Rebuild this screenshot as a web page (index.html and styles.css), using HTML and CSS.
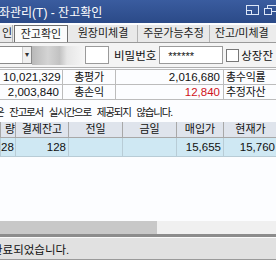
FILE: index.html
```html
<!DOCTYPE html>
<html lang="ko">
<head>
    <meta charset="UTF-8">
    <title>잔고확인</title>
    <link rel="stylesheet" href="styles.css">
</head>
<body>
    <div class="window">
        <div class="titlebar">
            <span class="title">좌관리(T) - 잔고확인</span>
            <span class="controls">
                <svg width="13" height="10" viewBox="0 0 13 10">
                    <rect x="0.5" y="0.5" width="12" height="9" fill="none" stroke="#dce6f7"/>
                    <rect x="0.5" y="5.5" width="5" height="4" fill="none" stroke="#dce6f7"/>
                </svg>
                <svg width="12" height="10" viewBox="0 0 12 10">
                    <rect x="3.5" y="0.5" width="9" height="6" fill="none" stroke="#dce6f7"/>
                    <rect x="0.5" y="3.5" width="7" height="6" fill="#2d4d8e" stroke="#dce6f7"/>
                </svg>
            </span>
        </div>
        <div class="tabs">
            <div class="tab cut">인</div>
            <div class="tab active">잔고확인</div>
            <div class="tab t3">원장미체결</div>
            <div class="tab t4">주문가능추정</div>
            <div class="tab">잔고/미체결</div>
        </div>
        <div class="inputs">
            <div class="combo"><span class="arrow">▾</span></div>
            <div class="masked"></div>
            <div class="field"></div>
            <span class="label">비밀번호</span>
            <div class="field pw">******</div>
            <span class="check"></span>
            <span class="label">상장잔</span>
        </div>
        <table class="summary">
            <colgroup>
                <col class="s1"><col class="s2"><col class="s3"><col class="s4">
            </colgroup>
            <tr>
                <td class="num">10,021,329</td>
                <td class="head">총평가</td>
                <td class="num">2,016,680</td>
                <td class="head">총수익률</td>
            </tr>
            <tr>
                <td class="num">2,003,840</td>
                <td class="head">총손익</td>
                <td class="num red">12,840</td>
                <td class="head">추정자산</td>
            </tr>
        </table>
        <div class="notice">은 잔고로서 실시간으로 제공되지 않습니다.</div>
        <table class="grid">
            <colgroup>
                <col class="c1"><col class="c2"><col class="c3"><col class="c4"><col class="c5"><col class="c6">
            </colgroup>
            <tr>
                <th class="first">량</th>
                <th>결제잔고</th>
                <th>전일</th>
                <th>금일</th>
                <th>매입가</th>
                <th>현재가</th>
            </tr>
            <tr class="row">
                <td>28</td>
                <td>128</td>
                <td></td>
                <td></td>
                <td>15,655</td>
                <td>15,760</td>
            </tr>
        </table>
        <div class="grid-empty"></div>
        <div class="hscroll"><div class="thumb"></div></div>
        <div class="status">완료되었습니다.</div>
    </div>
</body>
</html>
```

FILE: styles.css
```css
body {
    margin: 0;
    background: #fcfdff;
    font-family: "Liberation Sans", "Noto Sans CJK KR", sans-serif;
    font-size: 11px;
    color: #111;
}
.window {
    width: 276px;
    height: 260px;
    overflow: hidden;
    display: flex;
    flex-direction: column;
}
.titlebar {
    height: 23px;
    flex: none;
    display: flex;
    align-items: center;
    justify-content: space-between;
    background: linear-gradient(#3a5c9f, #2b4a88);
    color: #fff;
}
.title {
    font-size: 12px;
    margin-left: -1px;
}
.controls {
    display: flex;
    gap: 5px;
    margin-top: -4px;
}
.tabs {
    height: 17px;
    flex: none;
    display: flex;
    margin-top: 2px;
    background: #ececec;
    border-bottom: 1px solid #9a9a9a;
    white-space: nowrap;
}
.tab {
    line-height: 17px;
    font-size: 11px;
    color: #222;
    border-right: 1px solid #b4b4b4;
    background: #e9e9e9;
    text-align: center;
    flex: none;
    overflow: hidden;
}
.tab.cut {
    width: 12px;
    text-align: right;
    margin-right: 1px;
}
.tab.active {
    width: 52px;
    background: #fbfbfb;
    border: 1px solid #6f6f6f;
    border-bottom: none;
    line-height: 16px;
    margin-right: 1px;
}
.tab.t3 {
    width: 68px;
}
.tab.t4 {
    width: 71px;
}
.tab:last-child {
    padding-left: 5px;
    border-right: none;
}
.inputs {
    height: 24px;
    flex: none;
    display: flex;
    align-items: center;
    background: #f4f4f4;
    border-bottom: 1px solid #b0b0b0;
    white-space: nowrap;
}
.combo {
    width: 34px;
    height: 18px;
    background: #fff;
    border: 1px solid #8a8a8a;
    border-left: none;
    box-sizing: border-box;
    display: flex;
    justify-content: flex-end;
}
.arrow {
    width: 8px;
    font-size: 8px;
    line-height: 16px;
    text-align: center;
    color: #333;
    border-left: 1px solid #ccc;
    background: #f0f0f0;
}
.masked {
    width: 56px;
    height: 19px;
    background: linear-gradient(90deg, #b9b9b9, #d4d4d4 30%, #c2c2c2 52%, #e6e6e6 66%, #f6f6f6);
}
.field {
    width: 25px;
    height: 18px;
    background: #fff;
    border: 1px solid #9a9a9a;
    box-sizing: border-box;
}
.label {
    font-size: 11.5px;
    margin: 0 3px 0 5px;
}
.field.pw {
    width: 67px;
    padding-left: 8px;
    line-height: 18px;
    font-size: 11px;
}
.check {
    width: 11px;
    height: 11px;
    margin-left: 3px;
    border: 1px solid #777;
    background: #fff;
    flex: none;
}
.check + .label {
    margin-left: 2px;
}
.summary {
    border-collapse: collapse;
    table-layout: fixed;
    margin: 1px 0 0 -1px;
    width: 280px;
    flex: none;
}
.s1 { width: 63px; }
.s2 { width: 53px; }
.s3 { width: 108px; }
.s4 { width: 56px; }
.summary td {
    height: 14px;
    line-height: 14px;
    padding: 0 3px;
    border: 1px solid #bcbcbc;
    white-space: nowrap;
    overflow: hidden;
}
.summary .num {
    text-align: right;
    font-size: 11.5px;
}
.summary .head {
    text-align: center;
    font-size: 11px;
    letter-spacing: -0.3px;
}
.summary .head:last-child {
    text-align: left;
    padding-left: 2px;
}
.red {
    color: #d0131a;
}
.notice {
    height: 22px;
    flex: none;
    line-height: 24px;
    font-size: 10.5px;
    margin-left: -5px;
    white-space: nowrap;
    letter-spacing: -1.2px;
    word-spacing: 4px;
}
.grid {
    border-collapse: collapse;
    table-layout: fixed;
    width: 277px;
    flex: none;
}
.c1 { width: 15px; }
.c2 { width: 53px; }
.c3 { width: 54px; }
.c4 { width: 54px; }
.c5 { width: 47px; }
.c6 { width: 54px; }
.grid th {
    height: 15px;
    line-height: 15px;
    font-weight: normal;
    font-size: 11px;
    background: #dfe4ec;
    border: 1px solid #a8a8a8;
    border-top: none;
    padding: 0;
    white-space: nowrap;
    overflow: hidden;
}
.grid th.first {
    text-align: right;
}
.grid td {
    height: 18px;
    line-height: 18px;
    padding: 0 2px 0 0;
    text-align: right;
    background: #cfe8f3;
    border: 1px solid #b8ccd6;
    font-size: 11.5px;
    overflow: hidden;
}
.grid-empty {
    flex: 1;
}
.hscroll {
    height: 13px;
    flex: none;
    background: #f0f0f0;
    border-bottom: 3px solid #8c8c8c;
}
.thumb {
    width: 157px;
    height: 100%;
    background: #c8c8c8;
}
.status {
    height: 21px;
    flex: none;
    line-height: 24px;
    font-size: 11.5px;
    background: #e1e1e1;
    border-top: 1px solid #fafafa;
    border-bottom: 1px solid #9a9a9a;
    margin-left: -8px;
    white-space: nowrap;
}
```
